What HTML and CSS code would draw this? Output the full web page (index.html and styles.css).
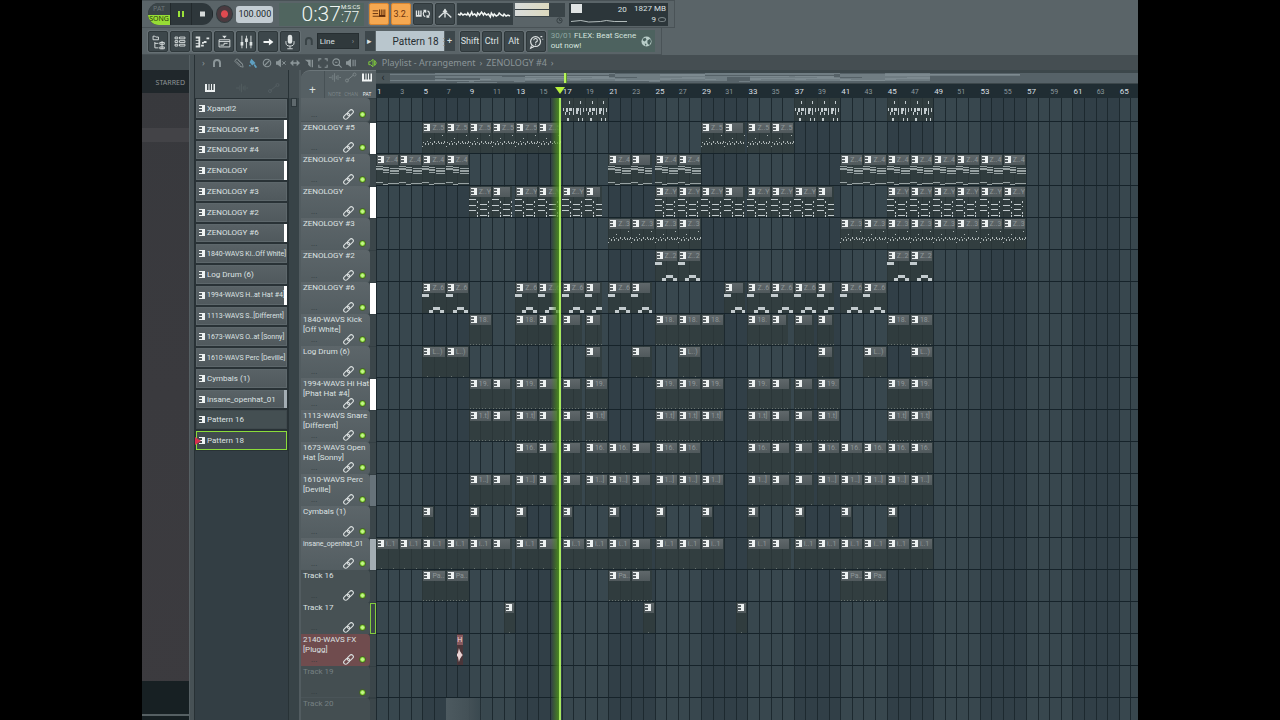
FILE: index.html
```html
<!DOCTYPE html>
<html lang="en">
<head>
<meta charset="utf-8">
<title>Playlist - Arrangement</title>
<link rel="stylesheet" href="styles.css">
</head>
<body>
<svg class="defs" aria-hidden="true">
  <symbol id="piano" viewBox="0 0 12 10"><path fill="currentColor" d="M1 1h2v6h1.500V1h1v6H7V1h1v6h1.500V1h1.500v8H1z"/></symbol>
  <symbol id="wave" viewBox="0 0 14 10"><path stroke="currentColor" fill="none" d="M0 5h2M2.500 4v2M4.500 2v6M6.500 0v10M8.500 3v4M10.500 2v6M12 5h2"/></symbol>
  <symbol id="auto" viewBox="0 0 12 10"><path stroke="currentColor" fill="none" d="M2.500 7.500l6-5"/><circle cx="2" cy="8" r="1.500" fill="none" stroke="currentColor"/><circle cx="9.500" cy="2" r="1.500" fill="none" stroke="currentColor"/></symbol>
  <symbol id="magnet" viewBox="0 0 10 10"><path stroke="currentColor" stroke-width="2" fill="none" d="M2 9V5a3 3 0 0 1 6 0v4"/></symbol>
  <symbol id="link" viewBox="0 0 12 12"><g fill="none" stroke="currentColor" stroke-width="1.200" transform="rotate(-45 6 6)"><rect x="-.5" y="3.800" width="7.500" height="4.400" rx="2.200"/><rect x="5" y="3.800" width="7.500" height="4.400" rx="2.200"/></g></symbol>
  <symbol id="pat" viewBox="0 0 6 7"><path fill="#eef2f2" shape-rendering="crispEdges" d="M0 0h6v7H0V6h3V4H0V3h3V1H0z"/></symbol>
</svg>
<div class="daw">
  <header class="toolbar">
    <div class="bar bar-top">
      <div class="transport">
        <button class="mode" aria-label="Pattern or song mode"><span>PAT</span><b>SONG</b></button>
        <button class="pause" aria-label="Pause"><svg viewBox="0 0 20 22"><path fill="#9be23a" d="M7 8h2v6H7zM11 8h2v6h-2z"/></svg></button>
        <button class="stop" aria-label="Stop"><svg viewBox="0 0 20 22"><path fill="#d6dada" d="M8 8.500h5v5H8z"/></svg></button>
      </div>
      <button class="record" aria-label="Record"></button>
      <label class="tempo"><input value="100.000" aria-label="Tempo"></label>
      <div class="time"><span class="clock">0:37</span><div class="cents"><span>M:S:CS</span><b>:77</b></div></div>
      <div class="tools">
        <button class="tool lit" aria-label="Typing keyboard"><svg viewBox="0 0 20 22"><path stroke="#5c2b0c" fill="none" d="M3 7.500h6M3 10.500h6M3 13.500h14"/><path fill="#5c2b0c" d="M10 6h1v6h1V6h1v6h1V6h1v6h1V6h1v8h-7z"/></svg></button>
        <button class="tool lit count">3.2.</button>
        <button class="tool" aria-label="Blend recording"><svg viewBox="0 0 20 22"><path fill="#dfe4e4" d="M2 7h1.500v5h1V7H6v5h1V7h1.500v7H2z"/><path stroke="#dfe4e4" stroke-width="1.300" fill="none" d="M12.500 7.500a3.500 3.500 0 0 0 0 6.500M15 7.500a3.500 3.500 0 0 1 0 6.500M10.500 7H13v2.500M17 14.500h-2.500V12"/></svg></button>
        <button class="tool" aria-label="Loop recording"><svg viewBox="0 0 20 22"><path stroke="#dfe4e4" stroke-width="1.500" fill="none" d="M10 6v9M3 15l4-4 3-2 3 2 4 4"/><path fill="#dfe4e4" d="M7 9l3-4 3 4z"/></svg></button>
      </div>
      <div class="scope"><svg viewBox="0 0 57 22" preserveAspectRatio="none"><path fill="none" stroke="#f2f6f4" stroke-width="1.500" d="M1 11l2 1 1-2 2 2 2-1 2 1 1-2 2 3 2-4 1 3 2-1 2 2 1-3 2 2 2-3 2 3 1-2 2 2 2-1 2 3 1-4 2 3 1-2 2 2 2-1 1-2 2 2 2 1 1-2 2 2 2-1 2 1"/></svg></div>
      <div class="meters"><i></i><i></i><svg viewBox="0 0 8 8"><circle cx="4" cy="4" r="3" fill="none" stroke="#343d40"/><path d="M4 2v2h2" fill="none" stroke="#343d40"/></svg></div>
      <div class="stats"><div class="cpu"><i></i><span>20</span><svg viewBox="0 0 57 5" preserveAspectRatio="none"><path d="M0 3.500l10-1 8 1.500 12-.5 6-1 8 1h13" fill="none" stroke="#b5bebe"/></svg></div><div class="mem"><span>1827 MB</span><span>9 <em></em></span></div></div>
    </div>
    <div class="bar bar-low">
      <div class="tools">
        <button class="tool" aria-label="Browser"><svg viewBox="0 0 20 22"><path stroke="#dfe4e4" fill="none" d="M4.500 4.500h2l1 1h3v3h-6zM6.500 11v6.500h4M6.500 12.500h4M12 11.500h5v2h-5zM12 16.500h5v2h-5zM14.500 10v9"/></svg></button>
        <button class="tool" aria-label="Channel rack"><svg viewBox="0 0 20 22"><path stroke="#dfe4e4" fill="none" d="M4.500 5.500h3v2h-3zM9.500 5.500h6v2h-6zM4.500 9.500h3v2h-3zM9.500 9.500h6v2h-6zM4.500 13.500h3v2h-3zM9.500 13.500h6v2h-6z"/></svg></button>
        <button class="tool" aria-label="Piano roll"><svg viewBox="0 0 20 22"><path fill="#dfe4e4" d="M3 5h5v12H3v-2h3v-2H3v-1h3v-2H3V9h3V7H3zM9 14h3v2H9zM12 10h3v2h-3zM15 6h3v2h-3zM10 11h2v2h-2z"/></svg></button>
        <button class="tool" aria-label="Playlist"><svg viewBox="0 0 20 22"><path stroke="#dfe4e4" fill="none" d="M4.500 8.500h12v8h-12zM4.500 10.500h12M6 14.500h4v-2h4"/><path fill="#dfe4e4" d="M8 4h5l-2.500 3z"/></svg></button>
        <button class="tool" aria-label="Mixer"><svg viewBox="0 0 20 22"><path stroke="#dfe4e4" fill="none" d="M5.500 4v14M10.500 4v14M15.500 4v14"/><path fill="#dfe4e4" d="M4 11h3v4H4zM9 7h3v4H9zM14 11h3v4h-3z"/></svg></button>
        <button class="tool" aria-label="Next"><svg viewBox="0 0 20 22"><path fill="#f2f5f5" d="M5 10h6V7l5 4-5 4v-3H5z"/></svg></button>
        <button class="tool" aria-label="Microphone"><svg viewBox="0 0 20 22"><rect x="7.500" y="3" width="5" height="10" rx="2.500" fill="#dfe4e4"/><path stroke="#dfe4e4" fill="none" d="M5.500 10v2a4.500 3.500 0 0 0 9 0v-2M10 15.500V18M7 18.500h6"/></svg></button>
      </div>
      <svg class="snap"><use href="#magnet"/></svg>
      <label class="line"><select aria-label="Snap"><option>Line</option></select><span>›</span></label>
      <div class="pattern"><button aria-label="Pattern menu">▸</button><button class="name">Pattern 18<i>⋮</i></button><button aria-label="Add pattern">+</button></div>
      <div class="tools">
        <button class="tool key">Shift</button><button class="tool key">Ctrl</button><button class="tool key">Alt</button>
        <button class="tool" aria-label="Help"><svg viewBox="0 0 20 22"><circle cx="9.500" cy="10.500" r="5.500" fill="none" stroke="#dfe4e4" stroke-width="1.300"/><path d="M7.500 9a2 2 0 1 1 2.500 2l-.5 1.500M9.500 13.500v1M5 15l-1 3 4-2M15 5h2M17 8h1" fill="none" stroke="#dfe4e4" stroke-width="1.200"/></svg></button>
      </div>
      <a class="news" href="#"><span><time>30/01</time> FLEX: Beat Scene<br>out now!</span><svg viewBox="0 0 12 12"><circle cx="6" cy="6" r="5.500" fill="#b9cdc9"/><path d="M2 3l3-1 1 2-2 2-2-1zM7 5l3-2 1 3-2 4-2-2zM4 8l2 1-1 2z" fill="#48605d"/></svg></a>
    </div>
  </header>
  <div class="main">
    <aside class="browser"><div class="tab">STARRED</div><div class="files"><i></i></div><div class="preview"></div></aside>
    <div class="splitter"></div>
    <section class="playlist">
      <nav class="menu">
        <span class="caret">›</span>
        <svg class="mag" viewBox="0 0 10 10"><use href="#magnet"/></svg>
        <svg viewBox="0 0 12 12"><path d="M2 2l2-1 6 6 1 4-4-1-6-6zM3 4l5 5M5 2.500l5 5" fill="none" stroke="currentColor"/></svg>
        <svg class="on" viewBox="0 0 12 12"><path d="M4 1l5 5-4 3-3-4zM8 7l3 4-2 1-2-3zM2 8l2 2H1z" fill="currentColor"/></svg>
        <svg viewBox="0 0 12 12"><circle cx="6" cy="6" r="4.500" fill="none" stroke="currentColor" stroke-width="1.300"/><path d="M3 9l6-6" stroke="currentColor" stroke-width="1.300"/></svg>
        <svg viewBox="0 0 12 12"><path d="M0 4h2l4-3v10L2 8H0z" fill="currentColor"/><path d="M7.500 4l4 4M11.500 4l-4 4" stroke="currentColor" stroke-width="1.200"/></svg>
        <svg viewBox="0 0 12 12"><path d="M0 6l4-4v3h4V2l4 4-4 4V7H4v3z" fill="currentColor"/></svg>
        <svg viewBox="0 0 12 12"><path d="M1 2h7v9L5 8V5z" fill="currentColor"/><path d="M10 2v9" stroke="currentColor" stroke-width="1.500"/></svg>
        <svg viewBox="0 0 12 12"><path d="M1 4V1h3M8 1h3v3M11 8v3H8M4 11H1V8" fill="none" stroke="currentColor" stroke-width="1.300"/></svg>
        <svg viewBox="0 0 12 12"><circle cx="5" cy="5" r="4" fill="none" stroke="currentColor" stroke-width="1.300"/><path d="M3.500 5h3M8 8l3.500 3.500" stroke="currentColor" stroke-width="1.300"/></svg>
        <svg viewBox="0 0 12 12"><path d="M0 4h2l4-3v10L2 8H0z" fill="currentColor"/><path d="M8.500 2v8M11 2v8" stroke="currentColor" stroke-width="1.300"/></svg>
        <svg class="green" viewBox="0 0 12 12"><path d="M1 4.500h2l3-3v9L3 8H1zM8 3l2 3-2 3z" fill="none" stroke="currentColor" stroke-width="1.200"/></svg>
        <span>Playlist - Arrangement</span><span class="caret">›</span><span>ZENOLOGY #4</span><span class="caret">›</span>
      </nav>
      <div class="work">
        <div class="picker">
          <div class="picker-tabs"><svg class="on"><use href="#piano"/></svg><svg><use href="#wave"/></svg><svg><use href="#auto"/></svg></div>
          <div class="picker-body"><div class="picker-list" id="picker"></div></div>
        </div>
        <div class="scroll"><i></i></div>
        <div class="arrange">
          <div class="corner"><button aria-label="Add track">+</button><div class="kinds"><span><svg><use href="#wave"/></svg>NOTE</span><span><svg><use href="#auto"/></svg>CHAN</span><span class="on"><svg><use href="#piano"/></svg>PAT</span></div></div>
          <div class="heads">
            <div class="overview"><button aria-label="Scroll left">‹</button><div class="minimap" id="minimap"></div></div>
            <div class="ruler" id="ruler"></div>
          </div>
          <div class="tracks" id="tracks"></div>
          <div class="lanes" id="lanes"><div class="playhead"></div></div>
        </div>
      </div>
    </section>
  </div>
</div>
<script src="app.js"></script>
</body>
</html>
```
FILE: styles.css
```css
* { box-sizing: border-box; }
body { margin: 0; background: #000; font-family: Roboto, "Noto Sans", sans-serif; color: #dde2e2; }
button, input, select { font: inherit; color: inherit; margin: 0; padding: 0; border: 0; background: none; }
svg { display: block; }
.defs { display: none; }
.daw { height: 100vh; margin: 0 142px; display: flex; flex-direction: column; overflow: hidden; background: #586266; }

/* toolbar */
.toolbar { flex: none; background: #5a6468; }
.bar { display: flex; align-items: center; height: 28px; padding: 0 6px; border-bottom: 1px solid #495256; border-top: 1px solid #495256; }
.bar-top { width: 533px; border-right: 1px solid #4a5357; }
.bar-low { width: 520px; height: 27px; border-top: 0; border-right: 1px solid #4a5357; }
.transport { display: flex; width: 66px; height: 22px; border-radius: 11px; overflow: hidden; background: #2e373b; }
.transport button { flex: 1; border-right: 1px solid #22292c; }
.transport svg { width: 20px; height: 22px; margin: 0 auto; }
.transport .mode { flex: none; width: 23px; display: flex; flex-direction: column; font: 7px/10px "Noto Sans", sans-serif; text-align: center; color: #6b7578; background: #3b4548; }
.mode span { flex: 1; padding-top: 1px; }
.mode b { background: #97dd35; color: #27380d; line-height: 8px; font-weight: 400; padding-bottom: 2px; }
.record { width: 18px; height: 18px; margin-left: 3px; border-radius: 50%; background: radial-gradient(#e04a50 0 3px, #4a3a3f 4px); border: 1px solid #303a3d; }
.tempo { margin-left: 3px; }
.tempo input { display: block; width: 37px; height: 17px; border-radius: 3px; background: #c3ccd2; color: #20282b; font-size: 9px; padding-left: 2px; }
.time { display: flex; justify-content: flex-end; width: 86px; height: 23px; margin-left: 6px; padding-right: 1px; background: #50655f; color: #eff5f2; }
.clock { font-size: 21px; line-height: 23px; font-weight: 300; }
.cents { width: 22px; font-size: 6px; line-height: 8px; white-space: nowrap; }
.cents b { display: block; font-size: 14px; line-height: 13px; font-weight: 300; }
.tools { display: flex; gap: 2px; }
.time + .tools { margin-left: 5px; }
.tool { width: 20px; height: 22px; background: #3d474b; border: 1px solid #2f383b; border-radius: 2px; box-shadow: 0 0 0 1px #667074; }
.bar-low .tool { height: 21px; }
.tool svg { width: 18px; height: 20px; }
.tool.lit { background: #f5a851; border-color: #d98630; color: #6e3510; }
.count { font-size: 9px; }
.key { font-size: 9px; }
.scope { width: 57px; height: 22px; margin-left: 2px; background: #353f43; }
.scope svg { width: 100%; height: 22px; }
.meters { display: grid; grid-template-rows: 6px 6px 8px; gap: 1px; width: 51px; height: 22px; margin-left: 2px; background: linear-gradient(#3a4448 0 14px, #5a6468 14px); }
.meters i { width: 34px; background: linear-gradient(90deg, #d9dcdb, #dcd9be); }
.meters svg { width: 7px; height: 7px; justify-self: end; margin-right: 2px; }
.stats { display: flex; width: 101px; height: 23px; margin-left: 4px; padding: 0 2px; background: #2c363a; font-size: 8px; line-height: 11px; }
.cpu { display: grid; grid-template-columns: 11px 1fr; grid-template-rows: 14px 6px; width: 56px; text-align: right; padding-top: 1px; }
.cpu i { height: 9px; background: #dfe3e3; }
.cpu svg { grid-column: 1 / 3; width: 100%; height: 5px; }
.mem { flex: 1; display: grid; justify-items: end; white-space: nowrap; }
.mem em { display: inline-block; width: 8px; height: 5px; border: 1px solid #7c8689; border-radius: 50%; }
.snap { width: 10px; height: 10px; margin-left: 4px; color: #394346; }
.line { display: flex; align-items: center; width: 43px; height: 16px; margin-left: 3px; background: #30393c; border: 1px solid #262e31; font-size: 8px; }
.line select { appearance: none; width: 34px; padding-left: 2px; }
.line span { color: #8b9497; }
.pattern { display: flex; gap: 1px; height: 20px; margin: 0 5px 0 6px; }
.pattern button { width: 10px; background: #3d474b; font-size: 9px; }
.pattern .name { display: flex; align-items: center; justify-content: flex-end; width: 68px; background: #b9c6cd; color: #252d31; font-size: 10px; }
.pattern i { width: 5px; color: #7f8a90; font-style: normal; }
.news { display: flex; align-items: center; justify-content: space-between; width: 110px; height: 22px; margin-left: 2px; padding: 0 3px; background: #4d625f; color: #d4e2de; font-size: 8px; line-height: 10px; text-decoration: none; white-space: nowrap; }
.news time { color: #90a8a2; }
.news svg { width: 11px; height: 11px; }

/* browser */
.main { flex: 1; min-height: 0; display: flex; }
.browser { flex: none; width: 47px; display: flex; flex-direction: column; background: linear-gradient(#38393d, #3c3b3f); border-top: 15px solid #424b4f; }
.tab { height: 23px; padding-right: 4px; text-align: right; font: 7px/25px "Noto Sans", sans-serif; background: #20272b; color: #8d9395; }
.files { flex: 1; padding-top: 35px; }
.files i { display: block; height: 14px; background: #434347; }
.preview { height: 39px; background: linear-gradient(#172023 33px, #566063 33px 35px, #172023 35px); }
.splitter { flex: none; width: 6px; background: #475155; border-right: 1px solid #283135; border-left: 1px solid #566064; }

/* playlist window */
.playlist { flex: 1; min-width: 0; display: flex; flex-direction: column; background: #454e52; }
.menu { flex: none; height: 15px; display: flex; align-items: center; gap: 4px; padding-left: 7px; color: #8b9598; font: 9px/15px "Noto Sans", sans-serif; white-space: nowrap; }
.menu svg { flex: none; width: 10px; height: 10px; }
.menu .mag { margin: 0 8px 0 3px; }
.menu .on { color: #5f9fc0; }
.menu .green { color: #7fc93d; margin-left: 8px; }
.work { flex: 1; min-height: 0; display: flex; }
.picker { flex: none; width: 93px; display: flex; flex-direction: column; background: #333e44; }
.picker-tabs { height: 28px; display: flex; gap: 20px; padding: 13px 0 0 9px; background: #454f53; color: #535d61; }
.picker-tabs svg { width: 12px; height: 10px; }
.picker-tabs .on { color: #eef2f2; }
.picker-body { flex: 1; }
.picker-list { display: grid; grid-auto-rows: 1fr; row-gap: 2px; height: 353px; padding: 1px; background: #293236; }
.picker-list button { position: relative; display: flex; align-items: center; gap: 2px; padding-left: 2px; border: 1px solid #5d676b; background: linear-gradient(#596266, #50595d); font-size: 8px; white-space: nowrap; text-align: left; }
.picker-list svg { flex: none; width: 6px; height: 7px; }
.picker-list .long { font-size: 7px; }
.picker-list .plain { background: #444f52; border-color: #3f494d; }
.picker-list .white::after, .picker-list .grey::after { content: ""; position: absolute; right: -1px; top: -1px; bottom: -1px; width: 3px; background: #fff; }
.picker-list .grey::after { background: #a3adb3; }
.picker-list .current { background: #414b4e; border-color: #8bdc3a; }
.picker-list .current::before { content: ""; position: absolute; left: -2px; border: 4px solid transparent; border-left: 6px solid #d8304e; border-right: 0; }
.scroll { flex: none; width: 13px; padding: 28px 2px 0; background: linear-gradient(#454f53 28px, #384347 28px); border-right: 2px solid #525c60; border-left: 1px solid #283236; }
.scroll i { display: block; height: 9px; background: #5f696d; border: 1px solid #2d373b; }
.arrange { flex: 1; min-width: 0; display: grid; grid-template-columns: 75px 1fr; grid-template-rows: 28px 1fr; }
.corner { display: flex; justify-content: space-between; background: #566064; border-radius: 9px 0 0; border-top: 1px solid #6b7579; }
.corner button { width: 24px; padding-top: 10px; font: 12px/12px "Noto Sans", sans-serif; border-right: 1px solid #475155; }
.kinds { display: flex; gap: 3px; font: 5px/8px "Noto Sans", sans-serif; color: #7b8588; padding-top: 1px; }
.kinds span { display: grid; justify-items: center; align-content: space-between; }
.kinds svg { width: 12px; height: 11px; }
.kinds .on { color: #f2f5f5; padding-right: 3px; }
.heads { min-width: 0; display: grid; grid-template-rows: 14px 14px; }
.overview { display: flex; padding: 3px 0 1px; background: #3c474b; }
.overview button { width: 14px; background: #4b565a; font-size: 10px; line-height: 8px; color: #1e272a; }
.minimap { flex: 1; display: grid; grid-template-rows: repeat(10, 1px); grid-template-columns: repeat(133, 1fr); background: #566268; }
.minimap i { background: rgba(138, 152, 158, .5); }
.minimap .now { grid-row: 1 / 11; width: 3px; background: #b8f45a; border-right: 1px solid #5b922f; }
.ruler, .lane { display: grid; grid-template-columns: repeat(262, minmax(0, 1fr)) minmax(0, .6fr); }
.ruler { position: relative; background: #202d33; font-size: 7px; line-height: 16px; color: #8c999e; }
.ruler span { white-space: nowrap; padding-left: 1px; }
.ruler .major { color: #d7dfe1; font-size: 8px; }
.ruler::after { content: ""; position: absolute; left: calc(24.1% - 5px); top: 3px; border: 5px solid transparent; border-top: 7px solid #b6f03c; border-bottom: 0; }

/* tracks */
.tracks, .lanes { min-height: 0; overflow: hidden; display: grid; grid-template-rows: 24px; grid-auto-rows: 32px; align-content: start; background: #343f43; }
.track { display: grid; grid-template-columns: 69px 6px; }
.track > div { display: flex; flex-direction: column; justify-content: space-between; min-width: 0; padding: 1px 0 0 2px; border-radius: 0 4px 4px 0; background: linear-gradient(#5d666a, #535d61); border-bottom: 1px solid #4a5458; font-size: 8px; line-height: 10px; }
.track .title { height: 20px; white-space: pre; }
.track .long { font-size: 7px; }
.track:first-child .title { height: 7px; }
.foot { display: flex; justify-content: flex-end; align-items: center; gap: 5px; margin-top: -1px; padding: 0 4px 1px 0; }
.foot span { margin-right: auto; padding-left: 8px; line-height: 8px; color: #2f383b; }
.foot svg { width: 11px; height: 11px; color: #d9dede; }
.foot button { width: 7px; height: 7px; border-radius: 50%; background: radial-gradient(#c5f28b 0 1px, #8fe043 2px); border: 1px solid #43631f; }
.track.plain > div { background: #475154; }
.track.off > div { background: #444e51; color: #768083; }
.track.red > div { background: #704c4e; }
.strip { background: #3b464a; margin: 1px 0; }
.white .strip { background: #fff; }
.grey .strip { background: #a3adb3; }
.dim .strip { background: #67737a; }
.current .strip { border: 1px solid #83cb3f; }
.lanes { position: relative; background:
  repeating-linear-gradient(90deg, #1d292f 0 1px, transparent 1px calc(100% / 65.65)),
  repeating-linear-gradient(90deg, #38474e 0 calc(400% / 65.65), #313f47 calc(400% / 65.65) calc(800% / 65.65)); }
.lane { border-bottom: 1px solid #16232a; min-width: 0; grid-template-rows: 100%; }
.clip { display: flex; flex-direction: column; min-width: 0; overflow: hidden; padding-top: 1px; background: rgba(49, 59, 59, .72); }
.clip > b { flex: none; display: flex; gap: 2px; height: 10px; margin: 0 1px; padding: 1px; background: linear-gradient(#60686b, #50595c); font-size: 7px; line-height: 8px; font-weight: 400; color: #8f9799; overflow: hidden; white-space: nowrap; }
.clip > b svg { flex: none; width: 6px; height: 7px; }
.clip > svg { flex: 1; min-height: 0; width: 100%; }
.clip.tail > b { margin-right: 2px; }
.clip.first > b { display: none; }
.clip.audio { background: #4a3539; }
.clip.audio > b { background: #87595e; color: #f1dede; margin: 0; padding: 1px 0; }
.clip.ghost { background: linear-gradient(90deg, #4d5a60, #445157 60%, transparent); }
.playhead { position: absolute; top: 0; bottom: 0; left: calc(24.1% - 9px); width: 10px; background: linear-gradient(90deg, transparent, #4d8f1c 8px, #b4fb62 8px); opacity: .9; }
```
FILE: app.js
```javascript
const rects = list => list.map(([x, y, w, h]) => `<rect x="${x}" y="${y}" width="${w}" height="${h}"/>`).join('');
// Note shapes for a two-bar clip, below the 10px clip title.
const art = {
  keys: [[1,9,1,3],[4,9,2,4],[7,9,3,3],[11,9,1,4],[14,9,3,3],[18,9,1,4],[21,9,1,4],[3,13,1,3],[7,13,1,3],[11,13,1,3],[14,12,2,3],[18,13,1,3],[5,19,2,3],[16,19,1,3],[20,19,1,3],[7,2,1,3],[18,2,1,3]],
  arp: [[0,13,1,1],[1,9,1,1],[3,10,1,2],[5,8,1,1],[6,10,1,2],[8,5,1,1],[8,9,1,1],[10,10,1,2],[11,20,2,1],[12,8,1,2],[14,10,1,1],[16,8,1,2],[17,10,1,1],[19,9,1,2],[20,2,1,1],[21,10,1,1],[22,8,1,2]],
  chords: [[0,1,7,1],[0,3,7,2],[7,2,6,1],[7,4,6,2],[7,7,6,1],[14,3,9,1],[14,5,9,2],[14,8,9,1],[0,17,7,1],[7,19,5,1],[12,18,7,1],[19,18,4,1]],
  stabs: [[0,2,7,1],[0,8,7,1],[0,13,7,1],[8,4,1,2],[8,10,1,1],[8,15,1,2],[8,18,1,2],[11,7,7,1],[11,12,7,1],[11,18,7,1],[19,4,1,2],[19,9,1,1],[19,15,1,2],[19,18,1,2]],
  bass: [[0,1,7,3],[7,17,4,3],[11,14,7,3],[18,17,4,3]],
  hats: [[1,19,1,1],[4,19,1,1],[7,19,1,1],[10,19,1,1],[13,19,1,1],[16,19,1,1],[20,19,1,1]],
  few: [[5,19,1,1],[17,19,1,1]]
};
const run = (from, to) => { const out = []; for (let b = from; b < to; b += 2) out.push(b); return out; };
// A clip is a start bar, or [start bar, length in bars].
const tracks = [
  ['', 'Xpand!2', '', 'keys', '', '', [17,19,37,39,45,47]],
  ['ZENOLOGY #5', 'ZENOLOGY #5', 'white', 'arp', 'Z..5', '', [...run(5,17),29,[31,1.75],33,35]],
  ['ZENOLOGY #4', 'ZENOLOGY #4', '', 'chords', 'Z..4', '', [...run(1,9),21,[23,1.75],25,27,...run(41,57)]],
  ['ZENOLOGY', 'ZENOLOGY', 'white', 'stabs', 'Z..Y', '', [9,[11,1.75],13,15,17,[19,1.5],25,27,29,[31,1.75],33,35,37,[39,1.5],...run(45,57)]],
  ['ZENOLOGY #3', 'ZENOLOGY #3', '', 'arp', 'Z..3', '', [...run(21,29),...run(41,57)]],
  ['ZENOLOGY #2', 'ZENOLOGY #2', '', 'bass', 'Z..2', '', [25,27,45,47]],
  ['ZENOLOGY #6', 'ZENOLOGY #6', 'white', 'bass', 'Z..6', '', [5,7,13,15,17,[19,1.5],21,[23,1.75],[31,1.75],33,35,37,[39,1.5],41,43]],
  ['1840-WAVS Kick\n[Off White]', '1840-WAVS Ki..Off White]', '', 'hats', '18.', '', [9,13,[15,1.75],[17,1.75],[19,1.5],25,27,29,33,[35,1.5],[37,1.75],[39,1.5],45,47]],
  ['Log Drum (6)', 'Log Drum (6)', '', 'few', 'L..)', '', [5,7,[19,1.5],[23,1.75],27,[39,1.5],43,47]],
  ['1994-WAVS Hi Hat\n[Phat Hat #4]', '1994-WAVS H..at Hat #4]', 'white', 'hats', '19.', '', [9,[11,1.75],13,[15,1.75],[17,1.75],19,25,27,29,33,[35,1.75],[37,1.75],39,45,47]],
  ['1113-WAVS Snare\n[Different]', '1113-WAVS S..[Different]', '', 'hats', '1.t]', '', [9,[11,1.75],13,[15,1.75],[17,1.75],19,25,27,29,33,[35,1.75],[37,1.75],39,45,47]],
  ['1673-WAVS Open\nHat [Sonny]', '1673-WAVS O..at [Sonny]', '', 'few', '16.', '', [13,[15,1.75],[17,1.75],19,21,[23,1.75],25,27,33,[35,1.75],[37,1.75],...run(39,49)]],
  ['1610-WAVS Perc\n[Deville]', '1610-WAVS Perc [Deville]', 'dim', 'few', '1..]', '', [9,[11,1.75],13,[15,1.75],[17,1.75],19,21,[23,1.75],25,27,29,33,[35,1.75],[37,1.75],...run(39,49)]],
  ['Cymbals (1)', 'Cymbals (1)', '', 'few', '', '', run(5,46).filter(b => b % 4 === 1).map(b => [b, 1])],
  ['insane_openhat_01', 'insane_openhat_01', 'grey', 'few', 'i..1', '', [...run(1,11),[11,1.75],13,[15,1.75],17,19,21,[23,1.75],25,27,29,33,[35,1.75],...run(37,49)]],
  ['Track 16', 'Pattern 16', '', 'hats', 'Pa..', 'plain', [5,7,21,[23,1.75],41,43]],
  ['Track 17', 'Pattern 18', 'current', 'few', '', 'plain', [[12,1],[24,1],[32,1]]],
  ['2140-WAVS FX\n[Plugg]', null, '', 'audio', 'H', 'red', [[8,.5]]],
  ['Track 19', null, '', '', '', 'off', []],
  ['Track 20', null, '', 'ghost', '', 'off', [[7,3.25]]]
];
const pat = '<svg><use href="#pat"/></svg>';
let picker = '', heads = '', lanes = '', map = '';
tracks.forEach(([name, pick, strip, kind, label, tone, clips], row) => {
  if (pick) picker += `<button class="${strip} ${tone} ${pick.length > 20 ? 'long' : ''}">${pat}${pick}</button>`;
  const link = tone === 'off' ? '' : '<svg><use href="#link"/></svg>';
  heads += `<div class="track ${strip} ${tone}"><div><span class="title ${name.length > 16 && !name.includes('\n') ? 'long' : ''}">${name}</span><span class="foot"><span>...</span>${link}<button aria-label="Mute track"></button></span></div><i class="strip"></i></div>`;
  lanes += '<div class="lane">' + clips.map(c => {
    const [bar, len] = Array.isArray(c) ? c : [c, 2];
    const col = Math.round((bar - 1) * 4) + 1;
    const at = `style="grid-area:1/${col}/2/${col + Math.round(len * 4)}"`;
    const line = Math.floor(row / 2) + 1, half = bar * 2 - 1;
    map += `<i style="grid-area:${line}/${half}/${line + 1}/${half + Math.ceil(len * 2)}"></i>`;
    if (kind === 'ghost') return `<div class="clip ghost" ${at}></div>`;
    if (kind === 'audio') return `<div class="clip audio" ${at}><b>${label}</b><svg viewBox="0 0 6 20" preserveAspectRatio="none"><path fill="#ead3d4" d="M0 9l1-1 1-5 1 3 2 3 1 1-1 1-2 3-1 3-1-5-1-1z"/></svg></div>`;
    const fill = { hats: '#67716f', few: '#67716f', chords: '#98a2a3', arp: '#b0b8b8' }[kind] || '#c3cbce';
    return `<div class="clip ${len < 2 && len > 1 ? 'tail' : ''} ${row ? '' : 'first'}" ${at}><b>${pat}${len === 2 ? label : ''}</b><svg fill="${fill}" viewBox="0 0 ${len * 11.6} ${row ? 20 : 22}" preserveAspectRatio="none">${rects(art[kind])}</svg></div>`;
  }).join('') + '</div>';
});
document.getElementById('picker').innerHTML = picker;
document.getElementById('tracks').innerHTML = heads;
document.getElementById('lanes').insertAdjacentHTML('afterbegin', lanes);
document.getElementById('ruler').innerHTML = run(1, 66).map(b =>
  `<span class="${b % 4 === 1 ? 'major' : ''}" style="grid-area:1/${(b - 1) * 4 + 1}/2/${b === 65 ? 264 : (b - 1) * 4 + 9}">${b}</span>`).join('');
document.getElementById('minimap').innerHTML = map + '<i class="now" style="grid-column:32/33"></i>';
```
